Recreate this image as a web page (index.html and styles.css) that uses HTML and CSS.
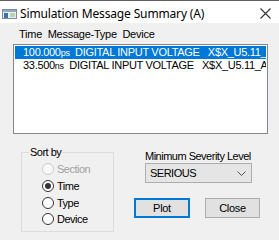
FILE: index.html
```html
<!DOCTYPE html>
<html lang="en">
<head>
  <meta charset="UTF-8">
  <meta name="viewport" content="width=device-width,initial-scale=1.0">
  <title>Simulation Message Summary (A)</title>
  <link rel="stylesheet" href="styles.css">
</head>
<body>
  <div class="window">
    <div class="titlebar">
      <svg class="app-icon" width="15" height="10" viewBox="0 0 15 10">
        <rect x="0.5" y="0.5" width="14" height="9" fill="#e8eef4" stroke="#7d8a99"/>
        <rect x="1" y="1" width="13" height="2" fill="#8fa8c4"/>
        <rect x="2" y="4" width="4" height="5" fill="#3d6fa8"/>
        <rect x="8" y="4" width="5" height="4" fill="#b9d7a8"/>
      </svg>
      <span class="title">Simulation Message Summary (A)</span>
      <svg class="close-x" width="11" height="11" viewBox="0 0 11 11">
        <path d="M0.5 0.5 L10.5 10.5 M10.5 0.5 L0.5 10.5" stroke="#333" stroke-width="1.1" fill="none"/>
      </svg>
    </div>

    <div class="content">
      <div class="list-header">Time&nbsp; Message-Type&nbsp; Device</div>
      <div class="listbox">
        <div class="row selected">100.000<small>ps</small>&nbsp; DIGITAL INPUT VOLTAGE&nbsp;&nbsp; X$X_U5.11_A</div>
        <div class="row">33.500<small>ns</small>&nbsp; DIGITAL INPUT VOLTAGE&nbsp;&nbsp; X$X_U5.11_A</div>
      </div>

      <div class="lower">
        <fieldset class="sort-group">
          <legend>Sort by</legend>
          <label class="radio disabled"><input type="radio" name="sort" disabled> Section</label>
          <label class="radio"><input type="radio" name="sort" checked> Time</label>
          <label class="radio"><input type="radio" name="sort"> Type</label>
          <label class="radio"><input type="radio" name="sort"> Device</label>
        </fieldset>

        <div class="side">
          <div class="severity">
            <div class="severity-label">Minimum Severity Level</div>
            <div class="combo">
              <span>SERIOUS</span>
              <svg width="9" height="5" viewBox="0 0 9 5">
                <path d="M0.5 0.5 L4.5 4.5 L8.5 0.5" stroke="#555" fill="none"/>
              </svg>
            </div>
          </div>
          <div class="buttons">
            <button class="btn default">Plot</button>
            <button class="btn">Close</button>
          </div>
        </div>
      </div>
    </div>
  </div>
</body>
</html>
```

FILE: styles.css
```css
body {
  margin: 0;
  background: #f0f0f0;
  font-family: "Liberation Sans", Arial, sans-serif;
  font-size: 11px;
  letter-spacing: -0.5px;
  color: #000;
}
.window {
  width: 279px;
  height: 240px;
  border-top: 1px solid #5f5f5f;
  box-sizing: border-box;
  overflow: hidden;
}
.titlebar {
  height: 22px;
  background: #fff;
  display: flex;
  align-items: center;
  padding-left: 2px;
}
.app-icon {
  margin-top: 3px;
}
.title {
  font-family: "Noto Sans", sans-serif;
  font-size: 12px;
  letter-spacing: -0.15px;
  margin-left: 3px;
  margin-top: 2px;
  color: #000;
}
.close-x {
  margin-left: auto;
  margin-right: 8px;
  margin-top: 3px;
}
.content {
  padding: 5px 11px 0 13px;
}
.list-header {
  line-height: 13px;
  padding-left: 6px;
  margin-bottom: 3px;
  letter-spacing: -0.25px;
}
.listbox {
  height: 90px;
  border: 1px solid #828790;
  background: #fff;
  padding: 1px;
  box-sizing: border-box;
  overflow: hidden;
}
.row {
  height: 13px;
  line-height: 13px;
  padding-left: 8px;
  white-space: nowrap;
  overflow: hidden;
  letter-spacing: -0.3px;
}
.row small {
  font-size: 9px;
}
.row.selected {
  background: #0078d7;
  color: #fff;
}
.lower {
  display: flex;
  margin-top: 12px;
}
.sort-group {
  margin: 0 0 0 8px;
  width: 93px;
  height: 86px;
  box-sizing: border-box;
  border: 1px solid #dcdcdc;
  padding: 2px 0 0 20px;
}
.sort-group legend {
  padding: 0 1px;
  margin-left: -13px;
  line-height: 13px;
}
.radio {
  display: flex;
  align-items: center;
  height: 16.7px;
  gap: 3px;
}
.radio input {
  appearance: none;
  width: 12px;
  height: 12px;
  margin: 0;
  border: 1px solid #333;
  border-radius: 50%;
  background: #fff;
  display: grid;
  place-content: center;
}
.radio input:checked::before {
  content: "";
  width: 6px;
  height: 6px;
  border-radius: 50%;
  background: #333;
}
.radio.disabled {
  color: #a0a0a0;
}
.radio.disabled input {
  border-color: #cccccc;
  background: #f8f8f8;
}
.side {
  margin-left: 20px;
  padding-top: 4px;
}
.severity {
  margin-left: 11px;
}
.severity-label {
  line-height: 13px;
}
.combo {
  width: 107px;
  height: 20px;
  box-sizing: border-box;
  border: 1px solid #adadad;
  background: #e5e5e5;
  display: flex;
  align-items: center;
  justify-content: space-between;
  padding: 0 5px 0 4px;
}
.buttons {
  display: flex;
  gap: 15px;
  margin-top: 15px;
}
.btn {
  width: 56px;
  height: 20px;
  border: 1px solid #adadad;
  background: #e1e1e1;
  font-family: "Liberation Sans", Arial, sans-serif;
  font-size: 11px;
  letter-spacing: -0.3px;
  padding: 0;
  color: #000;
}
.btn + .btn {
  width: 55px;
}
.btn.default {
  border-color: #0078d7;
  box-shadow: inset 0 0 0 1px #0078d7;
}
```
